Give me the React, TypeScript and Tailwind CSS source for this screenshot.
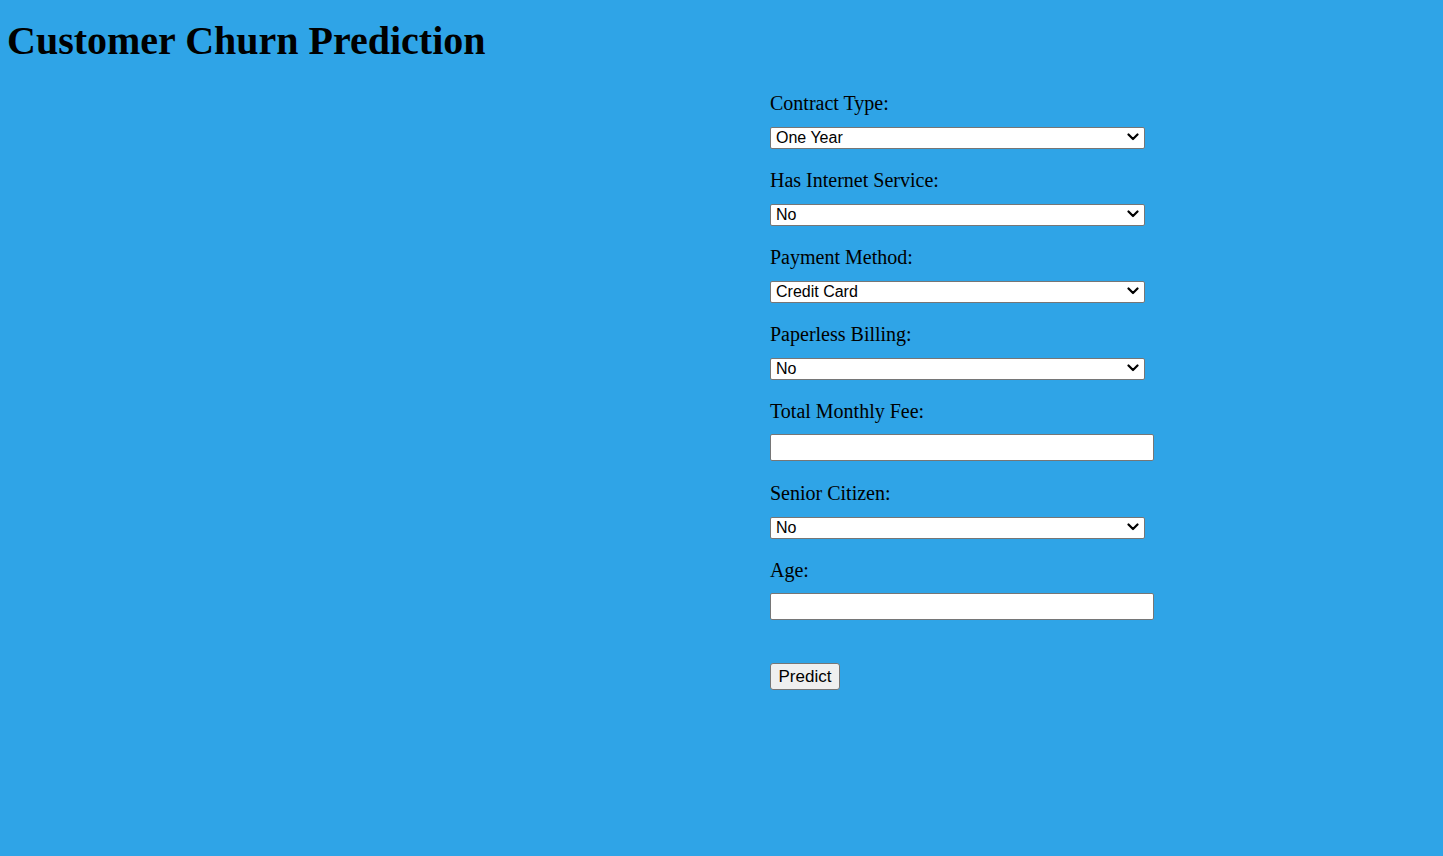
import React from 'react'

const fields = [
  { label: 'Contract Type:', type: 'select', value: 'One Year', options: ['Month-to-Month', 'One Year', 'Two Year'] },
  { label: 'Has Internet Service:', type: 'select', value: 'No', options: ['Yes', 'No'] },
  { label: 'Payment Method:', type: 'select', value: 'Credit Card', options: ['Electronic Check', 'Mailed Check', 'Bank Transfer', 'Credit Card'] },
  { label: 'Paperless Billing:', type: 'select', value: 'No', options: ['Yes', 'No'] },
  { label: 'Total Monthly Fee:', type: 'input' },
  { label: 'Senior Citizen:', type: 'select', value: 'No', options: ['Yes', 'No'] },
  { label: 'Age:', type: 'input' },
]

function Chevron() {
  return (
    <svg
      className="pointer-events-none absolute right-[6px] top-[7px]"
      width="12"
      height="8"
      viewBox="0 0 12 8"
      fill="none"
      stroke="#000"
      strokeWidth="2.2"
      strokeLinecap="round"
      strokeLinejoin="round"
    >
      <polyline points="1.5,1.5 6,6 10.5,1.5" />
    </svg>
  )
}

export default function App() {
  return (
    <div className="min-h-[856px] w-full bg-[#2fa4e7] font-['Liberation_Serif',serif] text-black">
      <h1 className="pl-[7px] pt-[18px] text-[40px] font-bold leading-[46px]">Customer Churn Prediction</h1>

      <form className="flex flex-col items-start pl-[770px] pt-[28px]">
        {fields.map((f) => (
          <div key={f.label} className="flex flex-col items-start">
            <label className="mb-[11px] block h-[23px] text-[20px] leading-[23px]">{f.label}</label>
            {f.type === 'select' ? (
              <div className="relative mb-[21px] h-[22px] w-[375px]">
                <select
                  defaultValue={f.value}
                  className="h-[22px] w-full appearance-none rounded-[2px] border border-[#767676] bg-white pl-[5px] font-['Liberation_Sans',Arial,sans-serif] text-[16px] leading-[20px]"
                >
                  {f.options?.map((o) => (
                    <option key={o}>{o}</option>
                  ))}
                </select>
                <Chevron />
              </div>
            ) : (
              <input
                type="text"
                className="mb-[21px] h-[27px] w-[384px] rounded-[2px] border border-[#767676] bg-white px-[3px] font-['Liberation_Sans',Arial,sans-serif] text-[16px]"
              />
            )}
          </div>
        ))}
        <button
          type="submit"
          className="mt-[22px] h-[27px] w-[70px] rounded-[3px] border border-[#767676] bg-[#efefef] font-['Liberation_Sans',Arial,sans-serif] text-[17px] leading-[20px]"
        >
          Predict
        </button>
      </form>
    </div>
  )
}
